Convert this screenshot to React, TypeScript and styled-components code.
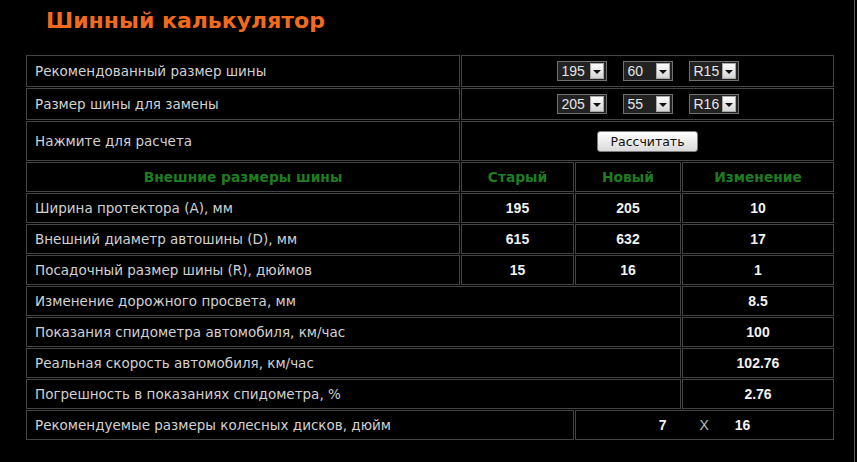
import styled, { createGlobalStyle } from 'styled-components';

const GlobalStyle = createGlobalStyle`
  html, body {
    margin: 0;
    padding: 0;
    background: #000;
  }
  body {
    font-family: "DejaVu Sans", Verdana, sans-serif;
  }
`;

type Align = 'left' | 'center';

const Page = styled.div`
  width: 855px;
  height: 462px;
  box-sizing: border-box;
  border-right: 1px solid #5e5e5e;
  background: #000;
  overflow: hidden;
`;

const Title = styled.h1`
  margin: 0;
  height: 55px;
  box-sizing: border-box;
  padding: 8px 0 0 46px;
  font-family: "DejaVu Sans", Verdana, sans-serif;
  font-weight: bold;
  font-size: 22px;
  line-height: 26px;
  color: #f26b1d;
`;

const Grid = styled.div`
  margin-left: 26px;
  display: grid;
  grid-template-columns: 434px 113px 106px 152px;
  grid-template-rows: 32px 32px 40px repeat(9, 30px);
  gap: 1px;
`;

const Cell = styled.div<{ $span?: number; $align?: Align }>`
  grid-column: span ${({ $span }) => $span ?? 1};
  box-sizing: border-box;
  border: 1px solid #444;
  display: flex;
  align-items: center;
  justify-content: ${({ $align }) => ($align === 'center' ? 'center' : 'flex-start')};
  padding: 0 8px;
  min-width: 0;
`;

const Label = styled.span`
  font-size: 13.5px;
  color: #d2d2d2;
  white-space: nowrap;
`;

const HeadText = styled.span`
  font-size: 13.8px;
  font-weight: bold;
  color: #1f7d1f;
  white-space: nowrap;
`;

const Value = styled.span`
  font-family: "Liberation Sans", Arial, sans-serif;
  font-size: 14px;
  font-weight: bold;
  color: #f2f2f2;
`;

const Times = styled.span`
  font-family: "Liberation Sans", Arial, sans-serif;
  font-size: 14px;
  color: #bdbdbd;
  margin: 0 26px 0 33px;
`;

const SelectRow = styled.div`
  display: flex;
  gap: 16px;
`;

const SelectBox = styled.div`
  width: 50px;
  height: 20px;
  box-sizing: border-box;
  border: 1px solid #717171;
  background: #222;
  display: flex;
  align-items: center;
  justify-content: space-between;
  padding: 0 2px 0 4px;
`;

const SelectValue = styled.span`
  font-family: "Liberation Sans", Arial, sans-serif;
  font-size: 14px;
  color: #e6e6e6;
`;

const Arrow = styled.span`
  width: 14px;
  height: 16px;
  box-sizing: border-box;
  background: linear-gradient(#fdfdfd, #d4d4d4);
  border: 1px solid #a8a8a8;
  display: flex;
  align-items: center;
  justify-content: center;

  &::after {
    content: '';
    border-left: 4px solid transparent;
    border-right: 4px solid transparent;
    border-top: 4px solid #111;
    margin-top: 2px;
  }
`;

const CalcButton = styled.button`
  width: 101px;
  height: 21px;
  box-sizing: border-box;
  border: 1px solid #7c7c7c;
  border-radius: 3px;
  background: linear-gradient(#ffffff, #dadada);
  font-family: "DejaVu Sans", Verdana, sans-serif;
  font-size: 12.5px;
  color: #111;
  padding: 0;
  cursor: pointer;
`;

function Select({ value }: { value: string }) {
  return (
    <SelectBox>
      <SelectValue>{value}</SelectValue>
      <Arrow />
    </SelectBox>
  );
}

const sizeRows = [
  { label: 'Рекомендованный размер шины', values: ['195', '60', 'R15'] },
  { label: 'Размер шины для замены', values: ['205', '55', 'R16'] },
];

const dimensionRows = [
  { label: 'Ширина протектора (A), мм', old: '195', next: '205', diff: '10' },
  { label: 'Внешний диаметр автошины (D), мм', old: '615', next: '632', diff: '17' },
  { label: 'Посадочный размер шины (R), дюймов', old: '15', next: '16', diff: '1' },
];

const resultRows = [
  { label: 'Изменение дорожного просвета, мм', value: '8.5' },
  { label: 'Показания спидометра автомобиля, км/час', value: '100' },
  { label: 'Реальная скорость автомобиля, км/час', value: '102.76' },
  { label: 'Погрешность в показаниях спидометра, %', value: '2.76' },
];

export default function App() {
  return (
    <Page>
      <GlobalStyle />
      <Title>Шинный калькулятор</Title>
      <Grid>
        {sizeRows.map((row) => (
          <>
            <Cell key={row.label}>
              <Label>{row.label}</Label>
            </Cell>
            <Cell $span={3} $align="center">
              <SelectRow>
                {row.values.map((v) => (
                  <Select key={v} value={v} />
                ))}
              </SelectRow>
            </Cell>
          </>
        ))}

        <Cell>
          <Label>Нажмите для расчета</Label>
        </Cell>
        <Cell $span={3} $align="center">
          <CalcButton>Рассчитать</CalcButton>
        </Cell>

        <Cell $align="center">
          <HeadText>Внешние размеры шины</HeadText>
        </Cell>
        <Cell $align="center">
          <HeadText>Старый</HeadText>
        </Cell>
        <Cell $align="center">
          <HeadText>Новый</HeadText>
        </Cell>
        <Cell $align="center">
          <HeadText>Изменение</HeadText>
        </Cell>

        {dimensionRows.map((row) => (
          <>
            <Cell key={row.label}>
              <Label>{row.label}</Label>
            </Cell>
            <Cell $align="center">
              <Value>{row.old}</Value>
            </Cell>
            <Cell $align="center">
              <Value>{row.next}</Value>
            </Cell>
            <Cell $align="center">
              <Value>{row.diff}</Value>
            </Cell>
          </>
        ))}

        {resultRows.map((row) => (
          <>
            <Cell key={row.label} $span={3}>
              <Label>{row.label}</Label>
            </Cell>
            <Cell $align="center">
              <Value>{row.value}</Value>
            </Cell>
          </>
        ))}

        <Cell $span={2}>
          <Label>Рекомендуемые размеры колесных дисков, дюйм</Label>
        </Cell>
        <Cell $span={2} $align="center">
          <Value>7</Value>
          <Times>X</Times>
          <Value>16</Value>
        </Cell>
      </Grid>
    </Page>
  );
}
